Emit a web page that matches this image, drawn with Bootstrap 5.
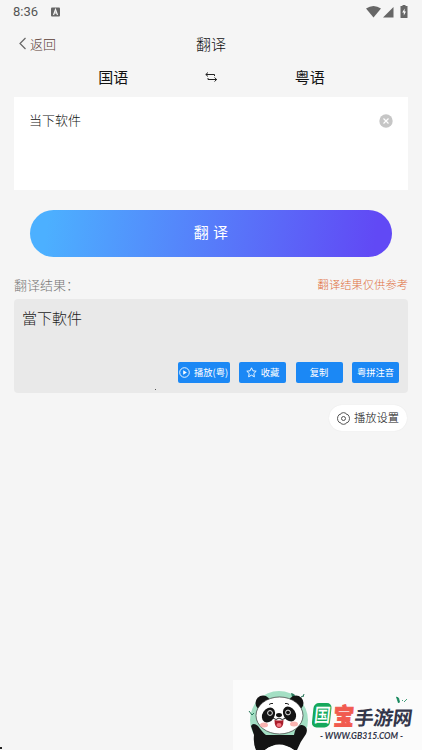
<!DOCTYPE html>
<html lang="zh-CN">
<head>
<meta charset="utf-8">
<meta name="viewport" content="width=device-width, initial-scale=1">
<title>翻译</title>
<link href="https://cdn.jsdelivr.net/npm/bootstrap@5.3.0/dist/css/bootstrap.min.css" rel="stylesheet">
<style>
body{background:#f5f5f5;font-family:"Noto Sans CJK SC",sans-serif;font-weight:300;color:#111;line-height:1}
svg{display:block;flex:none}
.screen{height:750px;overflow:hidden}
.status{height:23px;padding:0 13px;font:400 13px/23px Roboto,sans-serif;color:#555}
.topbar{height:40px;padding:0 18px;font-size:15px}
.back{color:#5c3d35;font-size:13px;gap:3px}
.langs{height:34px;font-size:15px;font-weight:400;color:#111;padding:0 21px 7px 22px}
.swap{width:14px}
.entry{height:93px;margin:0 14px;padding:15px 15px;font-size:13px;line-height:16px}
.go{height:47px;margin:19.500px 30px 0;padding-bottom:4px;font-size:15px;letter-spacing:.4px;font-weight:400;color:#fff;border:0;background:linear-gradient(97deg,#4cb0ff 5%,#6149f5 95%)}
.heading{height:42.500px;padding:21.500px 14px 0;font-size:13px;color:#777}
.hint{font-size:11.3px;color:#e0703f;padding-top:1px}
.result{height:94px;margin:0 14px;padding:11px 9px 10px 8px;background:#e9e9e9;border-radius:4px;font-size:15px;line-height:16px;color:#222}
.act{height:21px;width:47px;border-radius:2px;background:#1b88f5;color:#fff;font-size:9.3px;font-weight:400;line-height:1;gap:4px;border:0;padding:0;white-space:nowrap}
.act-wide{width:52px}
.settings{height:26px;width:78px;margin:12px 15px 0 0;font-size:11.3px;gap:4px;box-shadow:0 0 1px #ddd}
.brand{width:189px;height:70px;background:#fbfbfb}
.speck{width:1px;height:1px;left:155px;top:389px;background:#555}
.speck-corner{width:2px;height:2px;left:0;top:747px;background:#222}
</style>
<script src="https://cdn.jsdelivr.net/npm/bootstrap@5.3.0/dist/js/bootstrap.bundle.min.js"></script>
</head>
<body>
<main class="screen d-flex flex-column position-relative">
  <div class="status d-flex align-items-center">
    <span>8:36</span>
    <svg class="ms-2" width="18" height="12" viewBox="0 0 18 12"><rect x="5" y="1.500" width="9" height="9" rx="1" fill="#666"/><path d="M7.500 9 9.500 3.500 11.500 9M8.200 7h2.600" fill="none" stroke="#f5f5f5" stroke-width="1.200"/></svg>
    <svg class="ms-auto" width="43" height="14" viewBox="0 0 43 14"><g fill="#666"><path d="M0 3.500Q7.500-1.500 15 3.500L7.500 12.500Z"/><path d="M17 12.500 27.500 2v10.500Z"/><path d="M36.500 0h3v1h2v11.500q0 .5-.5.500h-6q-.5 0-.5-.5V1h2Z"/></g><path d="m38.700 3.500-2.500 4h1.600v3L40 6.500h-1.500Z" fill="#fff"/></svg>
  </div>
  <header class="topbar row g-0 align-items-center">
    <div class="col back d-flex align-items-center"><svg width="9" height="13" viewBox="0 0 9 13"><path d="M7.500 1 2 6.500l5.500 5.500" fill="none" stroke="#666" stroke-width="1.200"/></svg>返回</div>
    <div class="col-auto">翻译</div>
    <div class="col"></div>
  </header>
  <div class="langs row g-0 align-items-center text-center">
    <div class="col">国语</div>
    <svg class="col-auto swap" width="14" height="12" viewBox="0 0 14 12"><path d="M3 1.500.8 3.500 3 5.500M.8 3.500h8.700V5M9.500 6.500l2.200 2-2.200 2M11.700 8.500H3V7" fill="none" stroke="#222"/></svg>
    <div class="col">粤语</div>
  </div>
  <section class="entry bg-white d-flex justify-content-between align-items-start">
    <span>当下软件</span>
    <svg width="14" height="16" viewBox="0 0 14 16"><circle cx="7" cy="9" r="6.700" fill="#c6c6c6"/><path d="m4.500 6.500 5 5m0-5-5 5" stroke="#fff" stroke-width="1.200"/></svg>
  </section>
  <button class="go rounded-pill">翻 译</button>
  <div class="heading d-flex justify-content-between"><span>翻译结果：</span><span class="hint">翻译结果仅供参考</span></div>
  <section class="result d-flex flex-column justify-content-between">
    <div>當下軟件</div>
    <div class="d-flex justify-content-end" style="gap:9.500px">
      <button class="act act-wide d-flex align-items-center justify-content-center"><svg width="11" height="11" viewBox="0 0 11 11"><circle cx="5.500" cy="5.500" r="4.800" fill="none" stroke="#fff" stroke-width=".9"/><path d="M4.200 3.200v4.600l3.600-2.300Z" fill="#fff"/></svg>播放(粤)</button>
      <button class="act d-flex align-items-center justify-content-center"><svg width="11" height="11" viewBox="0 0 11 11"><path d="m5.500.8 1.400 3 3.300.4-2.400 2.300.6 3.300-2.900-1.600-2.900 1.600.6-3.300L.8 4.200l3.300-.4Z" fill="none" stroke="#fff" stroke-width=".9"/></svg>收藏</button>
      <button class="act">复制</button>
      <button class="act">粤拼注音</button>
    </div>
  </section>
  <div class="settings bg-white rounded-pill align-self-end d-flex align-items-center justify-content-center"><svg width="13" height="13" viewBox="0 0 13 13"><g fill="none" stroke="#444" stroke-width=".9"><path d="M4.200 1.200Q6.500.1 8.800 1.200L9.500 2.400 11 2.700Q12.500 4.500 12.500 6.500T11 10.300L9.500 10.600 8.800 11.800Q6.500 12.900 4.200 11.800L3.500 10.600 2 10.300Q.5 8.500.5 6.500T2 2.700L3.500 2.400Z"/><circle cx="6.500" cy="6.500" r="2"/></g></svg>播放设置</div>
  <footer class="brand mt-auto align-self-end">
    <svg width="189" height="70" viewBox="233 680 189 70">
      <circle cx="279" cy="720" r="29" fill="#a4dfc4"/>
      <path d="M291 693q4 0 5 6l-4-2Z" fill="#28765a"/><path d="M301 697l2-1M304 694l-1 3M249 711l3 4M254 713l-2 2" stroke="#28765a" fill="none"/>
      <path d="M251 726Q253 722 258 726 263 733 266 735H294Q296 724 302 725 309 727 306 734 300 742 297 750H294Q278 740 265 750H256Q253 744 254 735Z" fill="#141414"/>
      <path d="M265 750q14-11 29 0Z" fill="#fff"/>
      <circle cx="263" cy="703" r="7.500" fill="#141414"/><circle cx="296" cy="703" r="7.500" fill="#141414"/>
      <ellipse cx="279.500" cy="715.500" rx="23.500" ry="18.500" fill="#fff" stroke="#333" stroke-width=".7"/>
      <g fill="#141414"><ellipse cx="268.500" cy="715" rx="6" ry="8" transform="rotate(32 268.500 715)"/><ellipse cx="289.500" cy="714" rx="6" ry="8" transform="rotate(-32 289.500 714)"/><ellipse cx="279" cy="715" rx="3" ry="2"/></g>
      <g fill="#111" stroke="#eee" stroke-width="1"><circle cx="270" cy="713" r="2.400"/><circle cx="288" cy="712.500" r="2.400"/></g>
      <path d="M269 704.500q2-1.500 4-1M285 703.500q2-.5 4 1M273 718q3 3 6 0 3 3 7 0" fill="none" stroke="#222"/>
      <path d="M274.500 720q5 1 9 0 0 8-4.500 8t-4.500-8Z" fill="#a91e2b"/><ellipse cx="279" cy="725" rx="2.500" ry="2" fill="#f27882"/>
      <ellipse cx="264" cy="725" rx="4" ry="2.500" fill="#f9b3b0"/><ellipse cx="294" cy="724" rx="4" ry="2.500" fill="#f9b3b0"/>
      <g font-family="Noto Sans CJK SC,sans-serif" font-weight="900">
        <rect x="0" y="0" width="18" height="24.500" rx="5" transform="translate(314 703) skewX(-6)" fill="#15a85b"/>
        <text transform="translate(313.500 722) skewX(-6) scale(1 1.150)" font-size="16.500" fill="#fff" font-weight="500">国</text>
        <text transform="translate(333 724.500) skewX(-4) scale(1 1.150)" font-size="20.500" fill="#f15b4f" stroke="#f15b4f" stroke-width=".8">宝</text>
        <text transform="translate(353.500 724.500) skewX(-8)" font-size="19.500" font-weight="700" fill="#33364a" textLength="58">手游网</text>
      </g>
      <path d="m396.500 697 2 6 1-1-1-4ZM404 702l3-3M402 701l1-1" fill="#14875b" stroke="#14875b" stroke-width=".8"/>
      <text x="320" y="739" font-family="Lato,sans-serif" font-size="9.300" font-weight="700" font-style="italic" fill="#33364a" textLength="83" lengthAdjust="spacingAndGlyphs">- WWW.GB315.COM -</text>
    </svg>
  </footer>
  <i class="speck position-absolute"></i><i class="speck-corner position-absolute"></i>
</main>
</body>
</html>
